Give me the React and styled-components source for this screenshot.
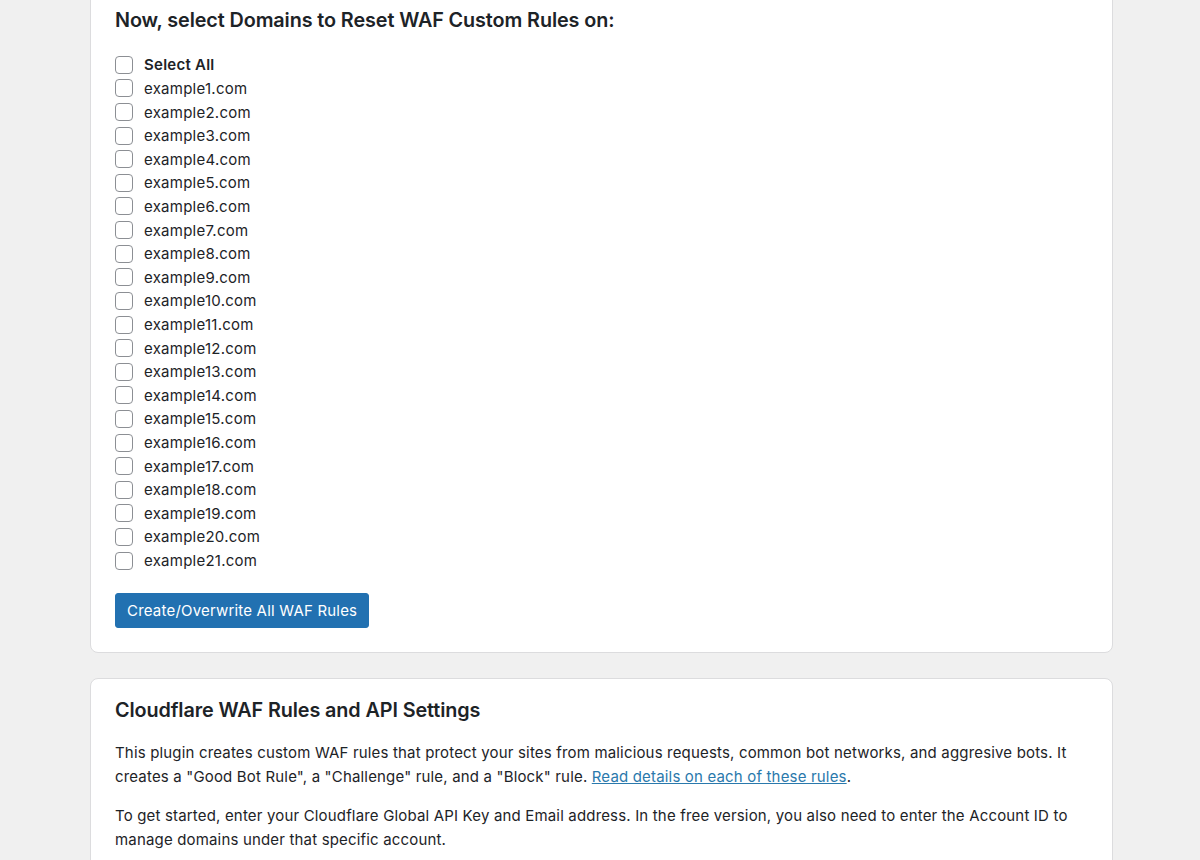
import React from "react";
import styled, { createGlobalStyle } from "styled-components";

const Global = createGlobalStyle`
  html, body { margin: 0; padding: 0; background: #f0f0f0; }
  body { font-family: Inter, "Noto Sans", "Liberation Sans", sans-serif; color: #1d2327; }
`;

const Page = styled.div`
  width: 1023px;
  margin-left: 90px;
  display: flex;
  flex-direction: column;
  gap: 25px;
`;

const Card = styled.section`
  background: #fff;
  border: 1px solid #dcdcde;
  border-radius: 8px;
  padding: ${(p) => p.$pad};
  margin-top: ${(p) => p.$offset || 0};
`;

const Heading = styled.h2`
  margin: 0;
  font-size: 19.8px;
  line-height: 30px;
  font-weight: 600;
  color: #1d2327;
  letter-spacing: -0.1px;
`;

const List = styled.div`
  margin-top: 18px;
  display: flex;
  flex-direction: column;
`;

const Row = styled.label`
  display: flex;
  align-items: center;
  height: 23.62px;
  gap: 11px;
  font-size: 15px;
  letter-spacing: 0.25px;
  font-weight: ${(p) => (p.$bold ? 600 : 400)};
  color: #1d2327;
`;

const Box = styled.span`
  width: 16px;
  height: 16px;
  border: 1.3px solid #8c8f94;
  border-radius: 4px;
  background: #fff;
  flex: none;
`;

const Button = styled.button`
  margin-top: 21px;
  align-self: flex-start;
  height: 35px;
  padding: 0 11px;
  background: #2271b1;
  color: #fff;
  border: 1px solid #2271b1;
  border-radius: 3px;
  font-family: inherit;
  font-size: 15px;
  letter-spacing: 0.2px;
  line-height: 33px;
  cursor: pointer;
`;

const Body = styled.div`
  display: flex;
  flex-direction: column;
`;

const Para = styled.p`
  margin: ${(p) => p.$mt} 0 0;
  font-size: 15px;
  letter-spacing: 0.17px;
  line-height: 23.5px;
  color: #1d2327;
  max-width: 960px;
`;

const Link = styled.a`
  color: #2a79ac;
  text-decoration: underline;
`;

const domains = Array.from({ length: 21 }, (_, i) => `example${i + 1}.com`);

export default function App() {
  return (
    <>
      <Global />
      <Page>
        <Card $pad="25px 24px 24px" $offset="-21px">
          <Body>
            <Heading>Now, select Domains to Reset WAF Custom Rules on:</Heading>
            <List>
              <Row $bold>
                <Box />
                Select All
              </Row>
              {domains.map((d) => (
                <Row key={d}>
                  <Box />
                  {d}
                </Row>
              ))}
            </List>
            <Button>Create/Overwrite All WAF Rules</Button>
          </Body>
        </Card>
        <Card $pad="16px 24px 40px">
          <Heading>Cloudflare WAF Rules and API Settings</Heading>
          <Para $mt="16px">
            This plugin creates custom WAF rules that protect your sites from malicious requests, common bot networks, and aggresive bots. It creates a "Good Bot Rule", a "Challenge" rule, and a "Block" rule.{" "}
            <Link href="#">Read details on each of these rules</Link>.
          </Para>
          <Para $mt="16px">
            To get started, enter your Cloudflare Global API Key and Email address. In the free version, you also need to enter the Account ID to manage domains under that specific account.
          </Para>
        </Card>
      </Page>
    </>
  );
}
